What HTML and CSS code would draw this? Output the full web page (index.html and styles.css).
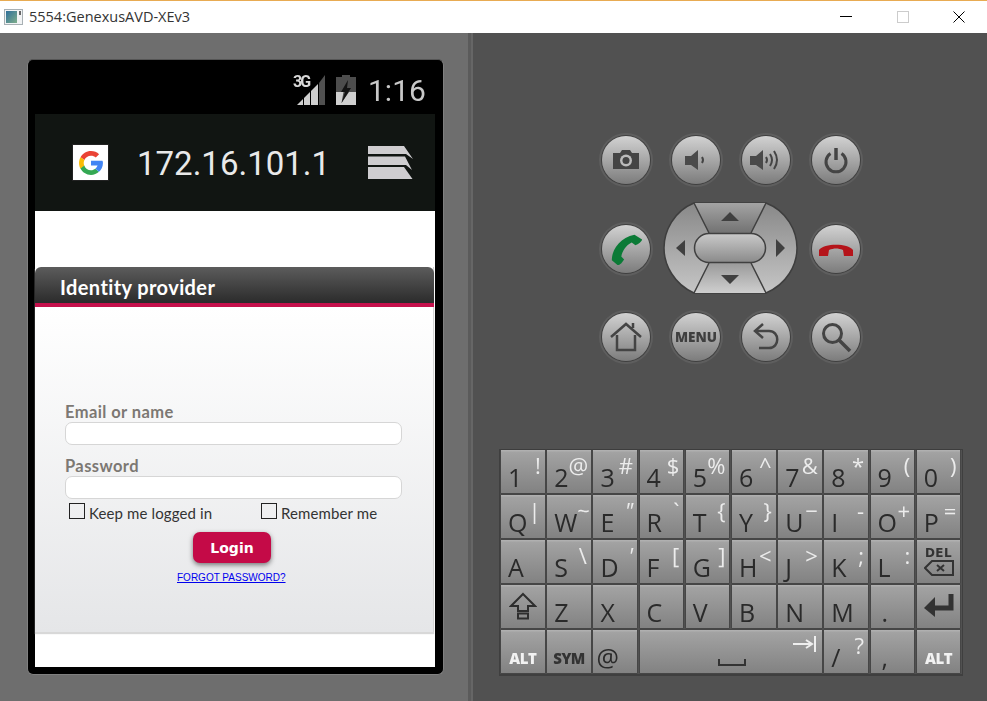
FILE: index.html
```html
<!DOCTYPE html>
<html lang="en">
<head>
<meta charset="utf-8">
<title>5554:GenexusAVD-XEv3</title>
<link rel="stylesheet" href="styles.css">
</head>
<body>
<div class="window">
  <header class="titlebar">
    <svg class="app-icon" viewBox="0 0 19 16" width="19" height="16">
      <defs><linearGradient id="ai" x1="0" y1="0" x2="1" y2="1"><stop offset="0" stop-color="#2f6f9a"/><stop offset="1" stop-color="#7fae8a"/></linearGradient></defs>
      <rect x="0.500" y="0.500" width="18" height="15" fill="#f1f3f4" stroke="#a8b0b4"/>
      <rect x="2" y="2" width="11" height="12" fill="url(#ai)"/>
      <rect x="15" y="2" width="2" height="4" fill="#666"/>
    </svg>
    <span class="title">5554:GenexusAVD-XEv3</span>
    <div class="win-controls">
      <svg width="12" height="12" viewBox="0 0 12 12"><path d="M0 5.500H12" stroke="#000"/></svg>
      <svg width="12" height="12" viewBox="0 0 12 12"><rect x="0.500" y="0.500" width="11" height="11" fill="none" stroke="#ccc"/></svg>
      <svg width="12" height="12" viewBox="0 0 12 12"><path d="M0.500 0.500L11.500 11.500M11.500 0.500L0.500 11.500" stroke="#000"/></svg>
    </div>
  </header>

  <div class="emulator">
    <section class="device-pane">
      <div class="bezel">
        <div class="statusbar">
          <svg class="signal" width="30" height="32" viewBox="0 0 30 32">
            <path d="M1 31L7 25V31Z" fill="#cfcfcf"/>
            <path d="M8 31V24L14 18V31Z" fill="#cfcfcf"/>
            <path d="M15 31V17L22 10V31Z" fill="#cfcfcf"/>
            <path d="M23 31V9L29 1V31Z" fill="#505050"/>
          </svg>
          <span class="net">3G</span>
          <svg class="battery" width="20" height="30" viewBox="0 0 20 30">
            <path d="M6 0H14V2H20V30H0V2H6Z" fill="#4d4d4d"/>
            <path d="M0 17H7.500L5.500 28L13 17H20V30H0Z" fill="#cfcfcf"/>
            <path d="M12 5L5 17H9L5.500 28L15 13H11Z" fill="#141414"/>
          </svg>
          <span class="clock">1:16</span>
        </div>
        <div class="screen">
          <div class="appbar">
            <span class="g-tile">
              <svg width="28" height="28" viewBox="0 0 48 48">
                <path d="M6 14.100l6.700 4.900C14.500 14.600 18.900 11.500 24 11.500c3.100 0 6 1.100 8.200 3l5.700-5.700C34.300 5.500 29.400 3.500 24 3.500 16.100 3.500 9.300 8 6 14.100z" fill="#ea4335"/>
                <path d="M6 14.100C4.400 17 3.500 20.400 3.500 24s.9 7 2.400 9.800l6.600-5.100c-.6-1.400-1-3-1-4.700s.4-3.500 1.200-5z" fill="#fbbc05"/>
                <path d="M24 44.500c5.300 0 10.100-2 13.700-5.300l-6.300-5.400c-2 1.500-4.600 2.700-7.400 2.700-5.400 0-10-3.100-11.500-8.100l-6.600 5.100C9.100 39.900 16 44.500 24 44.500z" fill="#34a853"/>
                <path d="M43.600 20.100H24v8h11.300c-.8 2.300-2.200 4.200-3.900 5.700l6.300 5.400C41.300 36 44.500 30.700 44.500 24c0-1.300-.3-2.700-.9-3.900z" fill="#4285f4"/>
              </svg>
            </span>
            <span class="host">172.16.101.1</span>
            <svg class="layers" width="46" height="34" viewBox="0 0 46 34">
              <path d="M0 0H36L45 13L38 8H0Z" fill="#cfcdd0"/>
              <path d="M0 10.500H37L44 24L38 19H0Z" fill="#cfcdd0"/>
              <path d="M0 21H36L44.500 33H0Z" fill="#cfcdd0"/>
            </svg>
          </div>
          <div class="page">
            <div class="card">
              <h1 class="card-title">Identity provider</h1>
              <form class="card-body">
                <label class="field-label">Email or name</label>
                <input class="field" type="text">
                <label class="field-label second">Password</label>
                <input class="field" type="password">
                <div class="checks">
                  <label class="check first"><span class="box"></span>Keep me logged in</label>
                  <label class="check"><span class="box"></span>Remember me</label>
                </div>
                <button class="login" type="button">Login</button>
                <a class="forgot" href="#">FORGOT PASSWORD?</a>
              </form>
            </div>
          </div>
        </div>
      </div>
    </section>
    <div class="divider"></div>

    <section class="controls-pane">
      <div class="buttons">
        <div class="rnd"><svg viewBox="0 0 32 32" width="32" height="32"><path d="M3 9H10L12 6H20L22 9H29V25H3Z" fill="#444"/><circle cx="16" cy="16.500" r="6" fill="#bbb"/><circle cx="16" cy="16.500" r="3.500" fill="#444"/></svg></div>
        <div class="rnd"><svg viewBox="0 0 32 32" width="32" height="32"><path d="M5 12H11L18 6V26L11 21H5Z" fill="#4a4a4a"/><path d="M22 13Q24 16 22 19" stroke="#444" stroke-width="2" fill="none"/></svg></div>
        <div class="rnd"><svg viewBox="0 0 36 32" width="36" height="32"><path d="M2 12H8L15 6V26L8 21H2Z" fill="#4a4a4a"/><path d="M18 13Q20 16 18 19M22 10Q26 16 22 22M26 7Q32 16 26 25" stroke="#444" stroke-width="2" fill="none"/></svg></div>
        <div class="rnd"><svg viewBox="0 0 32 32" width="32" height="32"><path d="M10.500 9.500A10 10 0 1 0 21.500 9.500" stroke="#444" stroke-width="3" fill="none"/><path d="M16 4V16" stroke="#444" stroke-width="3.500"/></svg></div>

        <div class="rnd"><svg viewBox="0 0 36 36" width="34" height="34"><path d="M27 3L35 8C35 10 31 13 28 14L24 11C18 14 14 20 13 26L16 29C14 32 12 35 9 35L3 30C3 18 12 6 27 3Z" fill="#0b7a36"/></svg></div>
        <div class="dpad">
          <svg width="136" height="94" viewBox="-1 -1 136 94">
            <defs>
              <linearGradient id="dg" x1="0" y1="0" x2="0" y2="1"><stop offset="0" stop-color="#888"/><stop offset="1" stop-color="#c6c6c6"/></linearGradient>
              <linearGradient id="tg" x1="0" y1="0" x2="0" y2="1"><stop offset="0" stop-color="#a4a4a4"/><stop offset="1" stop-color="#727272"/></linearGradient>
              <linearGradient id="bg" x1="0" y1="0" x2="0" y2="1"><stop offset="0" stop-color="#9a9a9a"/><stop offset="1" stop-color="#cfcfcf"/></linearGradient>
              <linearGradient id="cg" x1="0" y1="0" x2="0" y2="1"><stop offset="0" stop-color="#cacaca"/><stop offset="1" stop-color="#8a8a8a"/></linearGradient>
            </defs>
            <path d="M30 0H102C123 8 133 28 133 45C133 62 123 81 102 90H30C10 81 0 62 0 45C0 28 10 8 30 0Z" fill="url(#dg)" stroke="#3e3e3e" stroke-width="1.500"/>
            <path d="M30 0H102L87 30H45Z" fill="url(#tg)"/>
            <path d="M45 60H87L102 90H30Z" fill="url(#bg)"/>
            <path d="M30 0L45 30M102 0L87 30M45 60L30 90M87 60L102 90" stroke="#404040" stroke-width="1.500"/>
            <rect x="30.500" y="30.500" width="71" height="29" rx="14.500" fill="url(#cg)" stroke="#404040" stroke-width="1.500"/>
            <path d="M66 9L75 18H57ZM66 81L57 72H75ZM12 45L21 37V53ZM121 45L112 36V54Z" fill="#404040"/>
          </svg>
        </div>
        <div class="rnd"><svg viewBox="0 0 36 16" width="36" height="16"><path d="M1 15V9C6 2 30 2 35 9V15H26L25 9C20 7 16 7 11 9L10 15Z" fill="#b5141a"/></svg></div>

        <div class="rnd"><svg viewBox="0 0 34 34" width="34" height="34"><path d="M2 17L17 4L32 17M24 8V3M8 15V30H26V15" fill="none" stroke="#444" stroke-width="2.500"/></svg></div>
        <div class="rnd"><span class="menu-label">MENU</span></div>
        <div class="rnd"><svg viewBox="0 0 32 32" width="32" height="32"><path d="M13 3L5 10L13 17" fill="none" stroke="#444" stroke-width="2.500"/><path d="M6 10H19C30 10 30 27 19 27H9" fill="none" stroke="#444" stroke-width="2.500"/></svg></div>
        <div class="rnd"><svg viewBox="0 0 32 32" width="32" height="32"><circle cx="12.500" cy="12.500" r="9" fill="none" stroke="#444" stroke-width="3"/><path d="M19 19L30 30" stroke="#444" stroke-width="3.500"/></svg></div>
      </div>

      <div class="keyboard">
        <div class="key"><b>1</b><i>!</i></div>
        <div class="key"><b>2</b><i>@</i></div>
        <div class="key"><b>3</b><i>#</i></div>
        <div class="key"><b>4</b><i>$</i></div>
        <div class="key"><b>5</b><i>%</i></div>
        <div class="key"><b>6</b><i>^</i></div>
        <div class="key"><b>7</b><i>&amp;</i></div>
        <div class="key"><b>8</b><i>*</i></div>
        <div class="key"><b>9</b><i>(</i></div>
        <div class="key"><b>0</b><i>)</i></div>

        <div class="key"><b>Q</b><i>|</i></div>
        <div class="key"><b>W</b><i>~</i></div>
        <div class="key"><b>E</b><i class="slant">"</i></div>
        <div class="key"><b>R</b><i>`</i></div>
        <div class="key"><b>T</b><i>{</i></div>
        <div class="key"><b>Y</b><i>}</i></div>
        <div class="key"><b>U</b><i>−</i></div>
        <div class="key"><b>I</b><i>-</i></div>
        <div class="key"><b>O</b><i>+</i></div>
        <div class="key"><b>P</b><i>=</i></div>

        <div class="key"><b>A</b></div>
        <div class="key"><b>S</b><i>\</i></div>
        <div class="key"><b>D</b><i class="slant">'</i></div>
        <div class="key"><b>F</b><i>[</i></div>
        <div class="key"><b>G</b><i>]</i></div>
        <div class="key"><b>H</b><i>&lt;</i></div>
        <div class="key"><b>J</b><i>&gt;</i></div>
        <div class="key"><b>K</b><i>;</i></div>
        <div class="key"><b>L</b><i>:</i></div>
        <div class="key del"><span class="del-label">DEL</span>
          <svg width="30" height="16" viewBox="0 0 30 16"><path d="M8 1H29V15H8L1 8Z" fill="none" stroke="#333" stroke-width="2"/><path d="M13 5L20 11M20 5L13 11" stroke="#333" stroke-width="2"/></svg>
        </div>

        <div class="key icon-key"><svg width="28" height="28" viewBox="0 0 28 28"><path d="M14 2L26 14H19V19H9V14H2Z" fill="none" stroke="#2e2e2e" stroke-width="2"/><rect x="9" y="21.500" width="10" height="5" fill="none" stroke="#2e2e2e" stroke-width="2"/></svg></div>
        <div class="key"><b>Z</b></div>
        <div class="key"><b>X</b></div>
        <div class="key"><b>C</b></div>
        <div class="key"><b>V</b></div>
        <div class="key"><b>B</b></div>
        <div class="key"><b>N</b></div>
        <div class="key"><b>M</b></div>
        <div class="key mid"><b>.</b></div>
        <div class="key icon-key"><svg width="32" height="26" viewBox="0 0 32 26"><path d="M28 1V15H8" fill="none" stroke="#333" stroke-width="5"/><path d="M12 4V24L1 15Z" fill="#333"/></svg></div>

        <div class="key mod light"><span>ALT</span></div>
        <div class="key mod"><span>SYM</span></div>
        <div class="key at"><b>@</b></div>
        <div class="key space">
          <svg class="tab" width="24" height="16" viewBox="0 0 24 16"><path d="M0 8H18M13 4L19 8L13 12" fill="none" stroke="#eee" stroke-width="2"/><path d="M22 0V16" stroke="#eee" stroke-width="2"/></svg>
          <svg class="bar" width="28" height="8" viewBox="0 0 28 8"><path d="M1 0V6H27V0" fill="none" stroke="#333" stroke-width="2"/></svg>
        </div>
        <div class="key"><b>/</b><i>?</i></div>
        <div class="key mid"><b>,</b></div>
        <div class="key mod light"><span>ALT</span></div>
      </div>
    </section>
  </div>
</div>
</body>
</html>
```
FILE: styles.css
```css
* { box-sizing: border-box; }
html, body { margin: 0; padding: 0; }
body { width: 987px; height: 701px; overflow: hidden; background: #515151; }
.window { width: 987px; height: 701px; display: flex; flex-direction: column; }

.titlebar {
  height: 33px; background: #fff; border-top: 1px solid #e8ab52;
  display: flex; align-items: center; padding: 0 22px 1px 4px;
}
.app-icon { flex: none; }
.title { margin-left: 6px; font: 14.500px "Open Sans", sans-serif; color: #333; }
.win-controls { margin-left: auto; display: flex; gap: 44.500px; }

.emulator { flex: 1; display: flex; min-height: 0; }

.device-pane { width: 468px; flex: none; background: #6e6e6e; padding: 26px 0 0 27px; }
.divider { width: 5px; flex: none; background: #5b5b5b; border-right: 2px solid #666; }
.bezel {
  width: 417px; height: 616px; background: #000; border-radius: 6px;
  border: 1px solid #808080; border-top-color: #555; padding: 0 7px 7px;
  display: flex; flex-direction: column;
}
.statusbar {
  height: 54px; flex: none; display: flex; align-items: flex-start;
  padding: 14px 0 0 261px; color: #ccc; filter: blur(.3px);
}
.signal { flex: none; }
.net { width: 0; margin-left: -33px; margin-top: 0; font: bold 16px/16px Roboto, sans-serif; color: #d8d8d8; letter-spacing: -2px; white-space: nowrap; }
.battery { margin-left: 43px; margin-top: 1px; flex: none; }
.clock { margin-left: 12px; margin-top: 1px; font: 400 30px/32px Roboto, sans-serif; color: #c8c8c8; }

.screen { width: 400px; flex: 1; display: flex; flex-direction: column; background: #fff; }
.appbar {
  height: 97px; flex: none; background: #111512; display: flex; align-items: center;
  padding: 0 21px 0 37px;
}
.g-tile {
  width: 37px; height: 37px; background: #fff; border: 1px solid #222;
  display: flex; align-items: center; justify-content: center; flex: none;
}
.g-tile svg { filter: blur(.3px); }
.host { margin: 2px 0 0 28px; font: 400 33px/1 Roboto, sans-serif; color: #e9e9e9; }
.layers { margin-left: auto; flex: none; }

.page { flex: 1; padding-top: 56px; }
.card {
  width: 399px; height: 365px; display: flex; flex-direction: column;
  box-shadow: 0 2px 1px #d8d8d8;
  border-right: 1px solid #d4d4d4;
}
.card-title {
  margin: 0 -1px 0 0; height: 40px; padding: 8px 0 0 25px; flex: none;
  font: bold 20px/24px "Lato", sans-serif; color: #fff; letter-spacing: .4px;
  background: linear-gradient(#5c5c5c, #2b2b2b);
  border-radius: 6px 6px 0 0;
  border-bottom: 4px solid #c5114c;
}
.card-body {
  flex: 1; background: linear-gradient(#fff, #e5e6e8);
  display: flex; flex-direction: column; padding: 95px 32px 0 30px;
}
.field-label {
  font: bold 16.500px/20px "Lato", sans-serif; color: #7c7873; letter-spacing: .4px;
}
.field-label.second { margin-top: 11px; }
.field {
  display: block; width: 337px; height: 23px; background: #fff;
  border: 1px solid #d6d6d6; border-radius: 7px; outline: none; flex: none;
}
.checks { display: flex; padding: 4px 0 0 4px; }
.check {
  display: flex; align-items: flex-start;
  font: 15px/20px "Lato", sans-serif; color: #333; letter-spacing: .12px;
}
.check.first { width: 192px; }
.box {
  width: 16px; height: 16px; border: 1px solid #222; background: transparent;
  margin-right: 4px; flex: none;
}
.login {
  align-self: flex-start; margin: 9px 0 0 128px; width: 78px; height: 31px;
  background: #c40a47; border: none; border-radius: 7px; color: #fff;
  font: bold 14px "DejaVu Sans", sans-serif; box-shadow: 0 2px 5px rgba(0,0,0,.5);
}
.forgot {
  margin: 9px 0 0 112px; align-self: flex-start;
  font: 10px/12px "Liberation Sans", sans-serif; color: #00e;
}

.controls-pane { flex: 1; background: #515151; display: flex; flex-direction: column; padding: 83px 0 0 26px; }
.buttons {
  display: grid; grid-template-columns: repeat(4, 70px); grid-auto-rows: 88.500px;
  margin-left: 92px; justify-items: center; align-items: center;
  filter: blur(.35px);
}
.rnd {
  width: 48px; height: 48px; border-radius: 50%;
  background: linear-gradient(#d2d2d2, #7c7c7c);
  box-shadow: 0 0 0 1px #3f3f3f, 0 0 0 3px #5e5e5e;
  display: flex; align-items: center; justify-content: center;
}
.dpad { grid-column: span 2; display: flex; }
.menu-label { font: 800 13.500px "Open Sans", sans-serif; color: #3f3f3f; }

.keyboard {
  margin-top: 67px; width: 464px; height: 227px; padding: 0 3px 0 1px;
  display: grid; grid-template-columns: repeat(10, 43.700px); grid-auto-rows: 43px;
  column-gap: 2.500px; row-gap: 2px; background: #515151;
  border: 1px solid #3f3f3f; border-width: 1px 1px 2px 1px; filter: blur(.35px);
}
.key {
  display: flex; justify-content: space-between; padding: 4px 4px 0 7px;
  background: linear-gradient(#b3b3b3 0, #a2a2a2 6%, #828282 100%);
  box-shadow: 0 0 0 .5px #3c3c3c;
}
.key b { align-self: flex-end; margin-bottom: 0; font: 400 25px/31px "Open Sans", sans-serif; color: #2a2a2a; }
.key i { font: 400 22px/22px "Open Sans", sans-serif; color: #ececec; }
.key i.slant { font-style: italic; }
.key.mid { padding-left: 11px; }
.del { flex-direction: column; align-items: center; justify-content: center; gap: 0; padding: 0; }
.del-label { font: bold 12px/13px "DejaVu Sans", sans-serif; color: #333; letter-spacing: .5px; }
.icon-key { align-items: center; justify-content: center; padding: 0; }
.mod { align-items: flex-end; justify-content: center; padding: 0 0 6px; font: 800 15px/18px "Open Sans", sans-serif; letter-spacing: -.5px; color: #333; }
.mod.light { color: #f2f2f2; }
.key.at { padding-left: 3px; }
.space { grid-column: span 4; padding: 0; position: relative; }
.space .tab { position: absolute; right: 5px; top: 6px; }
.space .bar { position: absolute; left: 78px; bottom: 6px; }
```
